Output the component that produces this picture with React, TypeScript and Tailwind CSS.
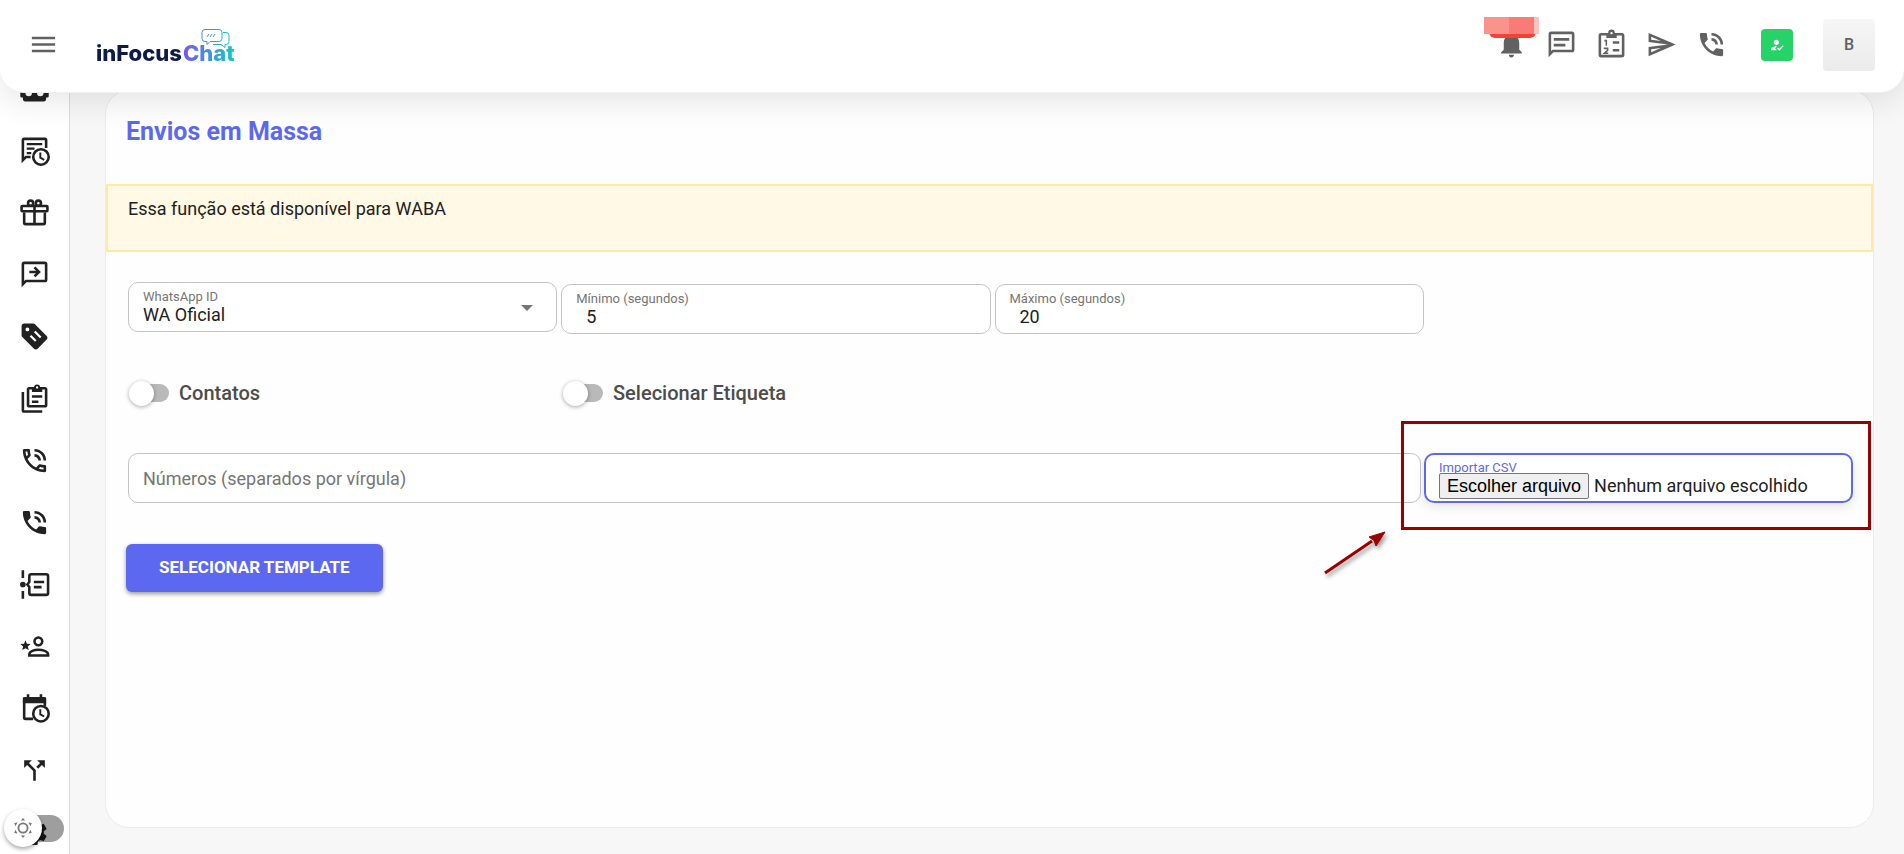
import type { ReactNode } from "react";
import {
  MdCallSplit,
  MdHowToReg,
  MdMenu,
  MdNotifications,
  MdOutlinePhoneInTalk,
  MdOutlineSend,
  MdPhoneInTalk,
  MdSettings,
} from "react-icons/md";

function Icon({ children }: { children: ReactNode }) {
  return (
    <svg viewBox="0 0 24 24" width="31" height="31" fill="none" stroke="currentColor" strokeWidth="2">
      {children}
    </svg>
  );
}

const RobotIcon = () => (
  <Icon>
    <path
      fill="currentColor"
      stroke="none"
      fillRule="evenodd"
      d="M12 2a2 2 0 0 1 1 3.73V7h1a7 7 0 0 1 7 7h1a1 1 0 0 1 1 1v3a1 1 0 0 1-1 1h-1v1a2 2 0 0 1-2 2H5a2 2 0 0 1-2-2v-1H2a1 1 0 0 1-1-1v-3a1 1 0 0 1 1-1h1a7 7 0 0 1 7-7h1V5.73A2 2 0 0 1 12 2M7.500 13a2.500 2.500 0 1 0 0 5 2.500 2.500 0 0 0 0-5m9 0a2.500 2.500 0 1 0 0 5 2.500 2.500 0 0 0 0-5"
    />
  </Icon>
);

const MessageClockIcon = () => (
  <Icon>
    <path d="M21 10V4a1 1 0 0 0-1-1H4a1 1 0 0 0-1 1v15.500L5.500 17H9" />
    <path d="M6 7h12M6 10.500h6M6 14h3.500" strokeWidth="1.800" />
    <circle cx="17" cy="17" r="6" />
    <path d="M16.500 13.500v4l3 1.700" strokeWidth="1.500" />
  </Icon>
);

const GiftIcon = () => (
  <Icon>
    <path d="M4 12v8a1 1 0 0 0 1 1h14a1 1 0 0 0 1-1v-8" />
    <rect x="2" y="7" width="20" height="4" rx="0.500" />
    <path d="M12 7v14" />
    <circle cx="9" cy="4.800" r="2" />
    <circle cx="15" cy="4.800" r="2" />
  </Icon>
);

const MessageArrowIcon = () => (
  <Icon>
    <path d="M3 19.500V4a1 1 0 0 1 1-1h16a1 1 0 0 1 1 1v12a1 1 0 0 1-1 1H5.500z" />
    <path d="M8 10h7M12 6.500l3.500 3.500-3.500 3.500" />
  </Icon>
);

const MessageTextIcon = () => (
  <Icon>
    <path d="M3 19.500V4a1 1 0 0 1 1-1h16a1 1 0 0 1 1 1v12a1 1 0 0 1-1 1H5.500z" />
    <path d="M6 8h12M6 12.500h9" />
  </Icon>
);

const TagTextIcon = () => (
  <Icon>
    <path
      fill="currentColor"
      stroke="none"
      fillRule="evenodd"
      d="M21.400 11.600l-9-9C12 2.200 11.500 2 11 2H4c-1.100 0-2 .9-2 2v7c0 .5.200 1 .6 1.400l9 9c.4.400.9.600 1.400.600s1-.2 1.400-.6l7-7c.4-.4.600-.9.600-1.400s-.2-1-.6-1.400M6.500 5a1.500 1.500 0 1 1 0 3 1.500 1.500 0 0 1 0-3m5.100 3.700l1.200-1.200 4.600 4.600-1.200 1.200zm-3.300 3.300l1.200-1.200 4.100 4.100-1.200 1.200z"
    />
  </Icon>
);

const ClipboardMultipleIcon = () => (
  <Icon>
    <path d="M3 7v14a1 1 0 0 0 1 1h14" />
    <rect x="7" y="4" width="14" height="14" rx="1" />
    <path d="M10 3.500V7h8V3.500h-2a2 2 0 0 0-4 0z" fill="currentColor" stroke="none" />
    <circle cx="14" cy="3.500" r="2.300" fill="currentColor" stroke="none" />
    <circle cx="14" cy="3.500" r="0.900" fill="white" stroke="none" />
    <path d="M10 10.500h8M10 14.500h5" />
  </Icon>
);

const TimelineTextIcon = () => (
  <Icon>
    <path d="M3 1v6M3 17v6" />
    <circle cx="3" cy="12" r="2.200" fill="currentColor" stroke="none" />
    <path d="M9 4h12a1.500 1.500 0 0 1 1.500 1.500v13A1.500 1.500 0 0 1 21 20H9.500A1.500 1.500 0 0 1 8 18.500V14l-1.500-2L8 10V5.500A1.500 1.500 0 0 1 9.500 4" />
    <path d="M11.500 10h8M11.500 14h6" />
  </Icon>
);

const AccountStarIcon = () => (
  <Icon>
    <circle cx="15" cy="8" r="3" />
    <path d="M8 19v-1c0-2.300 3.900-3.500 7-3.500s7.500 1.200 7.500 3.500v1z" />
    <path
      d="M5 13.300l2.500 1.500-.7-2.800L9 10.100l-2.900-.2L5 7.200 3.900 9.900 1 10.100 3.200 12l-.7 2.800z"
      fill="currentColor"
      stroke="none"
    />
  </Icon>
);

const CalendarClockIcon = () => (
  <Icon>
    <path d="M11 20H5a1 1 0 0 1-1-1V4.500h16V10" />
    <path d="M3 4.500A1.500 1.500 0 0 1 4.500 3H6V1h2v2h8V1h2v2h1.500A1.500 1.500 0 0 1 21 4.500V8H3z" fill="currentColor" stroke="none" />
    <circle cx="17" cy="16" r="6" />
    <path d="M16.500 12.500v4l3 1.700" strokeWidth="1.500" />
  </Icon>
);

const ClipboardNumberIcon = () => (
  <Icon>
    <rect x="3" y="4" width="18" height="17" rx="1" />
    <path d="M8 3.500h8V7H8z" fill="currentColor" stroke="none" />
    <circle cx="12" cy="3" r="2.600" fill="currentColor" stroke="none" />
    <circle cx="12" cy="3.200" r="0.900" fill="white" stroke="none" />
    <path d="M13 10.500h5M13 16.500h5" />
    <path d="M6.500 9H8v4M6 15h3v1.500L6.500 18.700H9.500" strokeWidth="1.200" />
  </Icon>
);

const SunIcon = () => (
  <svg viewBox="0 0 24 24" width="20" height="20" fill="#777">
    <circle cx="12" cy="12" r="5.500" fill="none" stroke="#777" strokeWidth="2.200" />
    <path d="M12 0l2.600 3H9.400zM12 24l-2.600-3h5.200zM1.500 6l4-.6-2.600 4.500zM22.500 6l-4-.6 2.600 4.500zM1.500 18l4 .6-2.600-4.500zM22.500 18l-4 .6 2.600-4.500z" />
  </svg>
);

const navItems = [
  { label: "Chatbot", icon: RobotIcon },
  { label: "Agendamentos", icon: MessageClockIcon },
  { label: "Aniversários", icon: GiftIcon },
  { label: "Mensagens rápidas", icon: MessageArrowIcon },
  { label: "Etiquetas", icon: TagTextIcon },
  { label: "Protocolos", icon: ClipboardMultipleIcon },
  { label: "Chamadas", icon: MdOutlinePhoneInTalk },
  { label: "Ligações", icon: MdPhoneInTalk },
  { label: "Linha do tempo", icon: TimelineTextIcon },
  { label: "Avaliações", icon: AccountStarIcon },
  { label: "Horários", icon: CalendarClockIcon },
  { label: "Fluxos", icon: MdCallSplit },
  { label: "Configurações", icon: MdSettings },
];

const headerActions = [
  { label: "Chat interno", icon: MessageTextIcon },
  { label: "Tarefas", icon: ClipboardNumberIcon },
  { label: "Envios", icon: MdOutlineSend },
  { label: "Telefone", icon: MdPhoneInTalk },
];

function Logo() {
  return (
    <svg width="144" height="44" viewBox="0 0 144 44" role="img" aria-label="inFocusChat">
      <defs>
        <linearGradient id="chat" gradientUnits="userSpaceOnUse" x1="89" y1="0" x2="142" y2="0">
          <stop offset="0" stopColor="#7659f5" />
          <stop offset="0.450" stopColor="#3f93e0" />
          <stop offset="1" stopColor="#06d6bb" />
        </linearGradient>
      </defs>
      <g fontFamily="Inter, sans-serif" fontWeight="800" fontSize="22">
        <text x="0" y="38" fill="#0d1b46">inFocus</text>
        <text x="87" y="38" fill="url(#chat)">Chat</text>
      </g>
      <g fill="none" stroke="url(#chat)" strokeWidth="1">
        <path d="M109 6.500h14a3 3 0 0 1 3 3v6a3 3 0 0 1-3 3h-9l-3 3v-3h-2a3 3 0 0 1-3-3v-6a3 3 0 0 1 3-3z" />
        <path d="M127 9.500h3a3 3 0 0 1 3 3v6a3 3 0 0 1-3 3h-1v3l-4-3h-8" />
        <path d="M111 14l2-3M114 14l2-3M117 14l2-3" />
      </g>
    </svg>
  );
}

function Header() {
  return (
    <header className="fixed inset-x-0 top-0 z-20 flex h-[93px] items-center rounded-b-3xl border-b border-[#f0f0f0] bg-white pr-[29px] pb-[3px] pl-7 shadow-[0_8px_32px_rgba(0,0,0,0.1)]">
      <button type="button" aria-label="Menu" className="text-[#616161]">
        <MdMenu size={31} />
      </button>
      <a href="#" className="ml-[37px]">
        <Logo />
      </a>

      <div className="ml-auto flex items-center">
        <div className="flex items-center gap-[19px] text-[#616161]">
          <button type="button" aria-label="Notificações" className="relative">
            <MdNotifications size={31} />
            <span className="absolute -top-3 -left-[7px] h-[21px] w-[47px] rounded-md bg-[#f44336]" />
            <span className="absolute -top-3 -left-3 flex h-[17px] w-[55px]">
              <span className="w-[25px] bg-[#fa938b]" />
              <span className="w-[25px] bg-[#f87c74]" />
              <span className="w-[5px] bg-[#fcc3be]" />
            </span>
          </button>
          {headerActions.map((action) => (
            <button key={action.label} type="button" aria-label={action.label}>
              <action.icon size={31} />
            </button>
          ))}
        </div>
        <button
          type="button"
          aria-label="Status"
          className="ml-[34px] flex h-8 w-8 items-center justify-center rounded bg-[#25d366] text-white"
        >
          <MdHowToReg size={16} />
        </button>
        <button
          type="button"
          className="ml-[30px] h-[52px] w-[52px] rounded bg-linear-to-b from-[#f6f6f6] to-[#ebebeb] text-base font-medium text-[#616161]"
        >
          B
        </button>
      </div>
    </header>
  );
}

function Sidebar() {
  return (
    <aside className="relative w-[70px] shrink-0 border-r border-[#dcdcdc] bg-white">
      <nav className="flex flex-col pt-[57px] text-[#212121]">
        {navItems.map((item) => (
          <a key={item.label} href="#" aria-label={item.label} className="flex h-[62px] items-center justify-center">
            <item.icon size={31} />
          </a>
        ))}
      </nav>
      <label className="fixed bottom-[7px] left-1 z-10 flex h-[38px] w-[60px] items-center">
        <input type="checkbox" aria-label="Modo escuro" className="peer sr-only" />
        <span className="ml-3 h-[27px] w-12 rounded-full bg-black/38" />
        <span className="absolute left-0 flex h-[38px] w-[38px] items-center justify-center rounded-full bg-white shadow-[0_2px_4px_rgba(0,0,0,0.35)]">
          <SunIcon />
        </span>
      </label>
    </aside>
  );
}

const fieldBox = "flex h-[50px] flex-col justify-center rounded-[10px] border bg-white px-3.5";

function NumberField({ id, label, value }: { id: string; label: string; value: number }) {
  return (
    <div className={`${fieldBox} mt-0.5 border-[#c4c4c4]`}>
      <label htmlFor={id} className="text-[13px] leading-4 text-[#757575]">
        {label}
      </label>
      <input id={id} defaultValue={value} className="w-full px-2.5 text-lg leading-5 text-[#212121] outline-none" />
    </div>
  );
}

function Toggle({ label }: { label: string }) {
  return (
    <label className="flex items-center">
      <input type="checkbox" className="peer sr-only" />
      <span className="relative flex h-[25px] w-10 items-center justify-end">
        <span className="h-[18px] w-8 rounded-full bg-[#b9b9b9]" />
        <span className="absolute left-0 h-[25px] w-[25px] rounded-full bg-white shadow-[0_1px_4px_rgba(0,0,0,0.35)]" />
      </span>
      <span className="ml-2.5 text-xl font-medium text-[#4c4c4c]">{label}</span>
    </label>
  );
}

export default function App() {
  return (
    <div className="flex h-screen overflow-hidden bg-[#f7f7f7] font-[Roboto,'Liberation_Sans',sans-serif] text-[#212121]">
      <Header />
      <Sidebar />

      <main className="min-w-0 flex-1 pt-[90px] pr-[30px] pb-[26px] pl-[35px]">
        <section className="relative h-full rounded-3xl border border-[#ebebeb] bg-[#fefefe]">
          <h1 className="pt-[25px] pl-5 text-[25px] leading-8 font-bold text-[#5d68f1]">Envios em Massa</h1>

          <div className="mt-9 h-[68px] border-2 border-[#ffe9a8] bg-[#fff9e5] px-5 pt-[9px] text-lg">
            Essa função está disponível para WABA
          </div>

          <form className="pl-[22px]">
            <div className="mt-[30px] grid grid-cols-4 gap-1 pr-4">
              <div className={`${fieldBox} relative border-[#c4c4c4]`}>
                <label htmlFor="whatsapp" className="text-[13px] leading-4 text-[#757575]">
                  WhatsApp ID
                </label>
                <select id="whatsapp" className="w-full appearance-none text-lg leading-5 outline-none">
                  <option>WA Oficial</option>
                </select>
                <svg viewBox="0 0 12 6" className="pointer-events-none absolute top-[22px] right-[23px] h-1.5 w-3 fill-[#757575]">
                  <path d="M0 0h12L6 6z" />
                </svg>
              </div>
              <NumberField id="min" label="Mínimo (segundos)" value={5} />
              <NumberField id="max" label="Máximo (segundos)" value={20} />
            </div>

            <div className="mt-[45px] grid grid-cols-4 gap-1 pr-3 pl-px">
              <Toggle label="Contatos" />
              <Toggle label="Selecionar Etiqueta" />
            </div>

            <div className="mt-[46px] grid grid-cols-4 gap-[3px] pr-5">
              <input
                aria-label="Números"
                placeholder="Números (separados por vírgula)"
                className="col-span-3 h-[50px] rounded-[10px] border border-[#c4c4c4] bg-white px-3.5 text-lg outline-none placeholder:text-[#757575]"
              />
              <div className="relative">
                <label
                  htmlFor="csv"
                  className="flex h-[50px] flex-col rounded-[10px] border-2 border-[#5d68f1] bg-white px-[13px] pt-[5px] shadow-[0_4px_12px_rgba(0,0,0,0.1)]"
                >
                  <span className="h-3 text-[13px] leading-4 text-[#5d68f1]">Importar CSV</span>
                  <span className="flex items-center gap-[5px] text-lg whitespace-nowrap">
                    <span className="rounded-xs border border-[#767676] bg-[#efefef] px-[7px] font-['Liberation_Sans',Arial,sans-serif] leading-6 text-black">
                      Escolher arquivo
                    </span>
                    Nenhum arquivo escolhido
                  </span>
                  <input id="csv" type="file" accept=".csv" className="sr-only" />
                </label>
                {/* highlight around the import field, with its arrow */}
                <span className="pointer-events-none absolute -top-8 -right-[18px] -left-[23px] h-[109px] border-3 border-[#990000]" />
                <svg
                  width="72"
                  height="52"
                  viewBox="0 0 72 52"
                  className="pointer-events-none absolute top-[76px] -left-[104px] drop-shadow-[2px_3px_2px_rgba(0,0,0,0.4)]"
                >
                  <path d="M5 44L52 12" stroke="#990000" strokeWidth="3" />
                  <path d="M65 3L49 8L54 11.500L56 17z" fill="#990000" stroke="#990000" />
                </svg>
              </div>
            </div>

            <button
              type="button"
              className="mt-[41px] -ml-0.5 h-12 rounded-md bg-[#5d68f1] px-[33px] text-[17px] font-bold text-white uppercase shadow-[0_2px_4px_rgba(0,0,0,0.4)]"
            >
              Selecionar Template
            </button>
          </form>
        </section>
      </main>
    </div>
  );
}
